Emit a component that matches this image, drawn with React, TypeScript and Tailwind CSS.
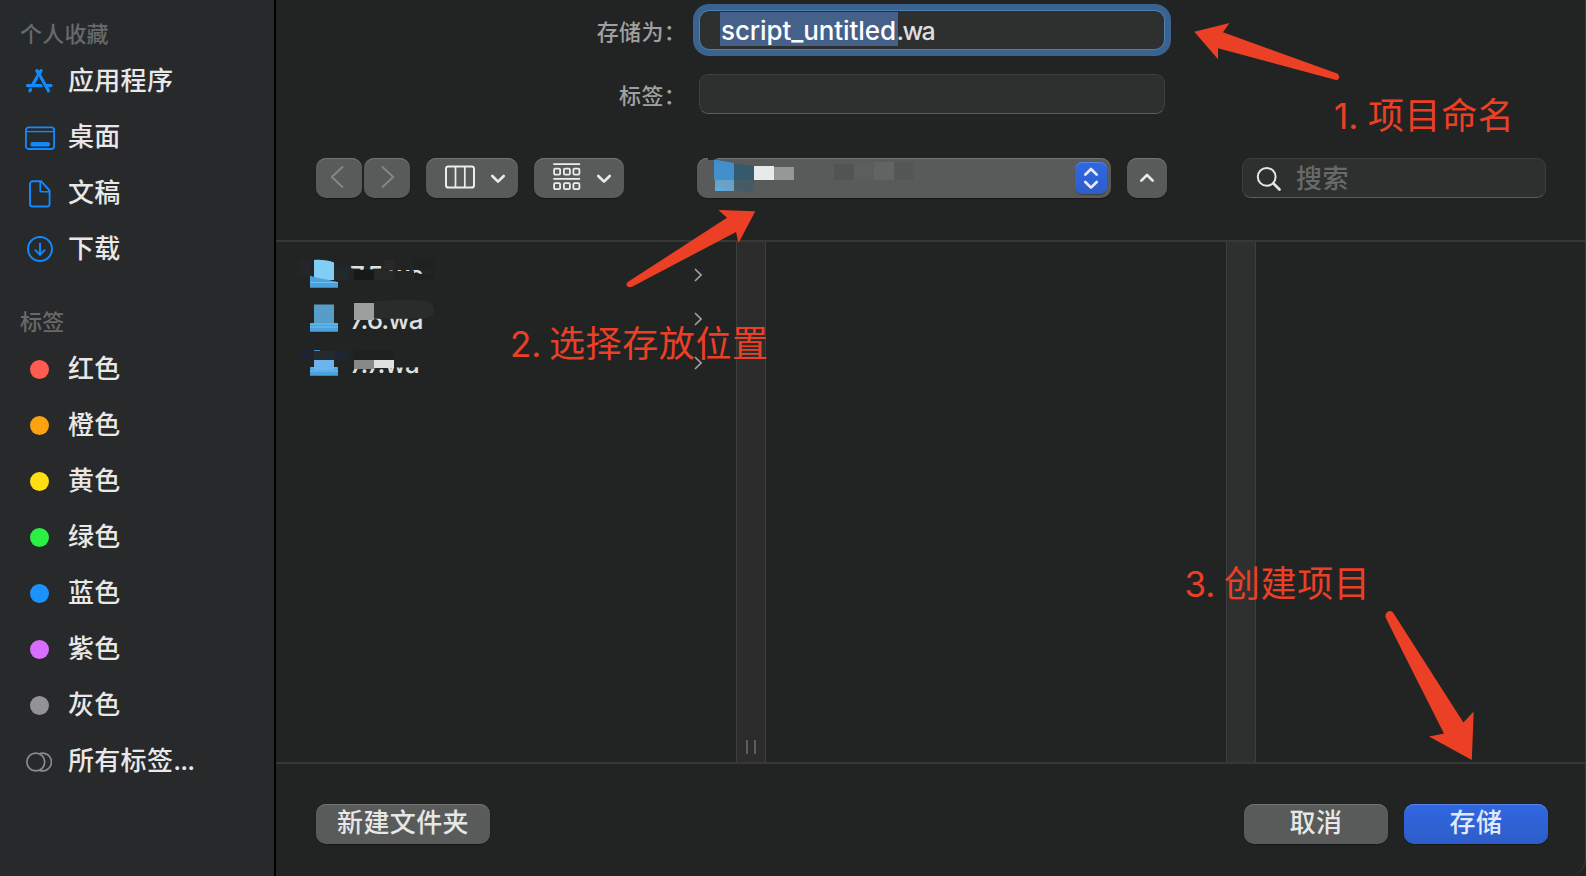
import type { ReactNode } from "react";

function AppsIcon() {
  return (
    <svg width="28" height="26" viewBox="0 0 28 26" className="-ml-[2px]" fill="none" stroke="#108bff" strokeLinecap="round">
      <path d="M16 2.800 8.400 15.500" strokeWidth="3.400" />
      <path d="M12 2.800 23.400 22.800" strokeWidth="3.400" />
      <path d="M2.500 17.600h14.500M22 17.600h4" strokeWidth="3.200" />
      <path d="M5.600 21.600 4.900 22.800" strokeWidth="3.200" />
      <path d="m13.200 8.800 8.800 16" stroke="#28292b" strokeWidth="1.200" strokeLinecap="butt" />
    </svg>
  );
}

function DesktopIcon() {
  return (
    <svg width="30" height="24" viewBox="0 0 30 24" className="mt-px" fill="none" stroke="#108bff" strokeWidth="1.8">
      <rect x="0.9" y="1.4" width="28.2" height="21.6" rx="2.8" />
      <path d="M1 5.600h28" strokeWidth="1.4" />
      <rect x="6" y="16.6" width="18.4" height="3.4" rx="0.8" fill="#108bff" stroke="#108bff" strokeWidth="1" />
    </svg>
  );
}

function DocumentIcon() {
  return (
    <svg width="22" height="28" viewBox="0 0 22 28" className="mt-px" fill="none" stroke="#108bff" strokeWidth="1.9" strokeLinejoin="round">
      <path d="M3.6 1.300h8.600l8.400 9.200v13.400a2.600 2.600 0 0 1-2.600 2.600H3.600A2.600 2.600 0 0 1 1 23.900V3.900a2.600 2.600 0 0 1 2.600-2.600Z" />
      <path d="M11.200 1.600v9.200a1 1 0 0 0 1 1h8" strokeWidth="1.6" />
    </svg>
  );
}

function DownloadIcon() {
  return (
    <svg width="26" height="26" viewBox="0 0 26 26" fill="none" stroke="#108bff" strokeWidth="1.9" strokeLinecap="round" strokeLinejoin="round">
      <circle cx="13" cy="13" r="12" />
      <path d="M13 7.400v11M8.400 14.200l4.600 4.600 4.600-4.600" />
    </svg>
  );
}

function AllTagsIcon() {
  return (
    <svg width="26" height="20" viewBox="0 0 26 20" className="mt-px -ml-[2px]" fill="none" stroke="#8b8c8d" strokeWidth="1.7">
      <circle cx="9.8" cy="10" r="8.9" />
      <path d="M13.600 1.600a8.900 8.900 0 1 1 0 16.800" />
    </svg>
  );
}

function Chevron({ up = false, color = "#e9eaea" }: { up?: boolean; color?: string }) {
  return (
    <svg width="16" height="10" viewBox="0 0 16 10" fill="none" stroke={color} strokeWidth="2.7" strokeLinecap="round" strokeLinejoin="round">
      <path d={up ? "M2.3 7.6 8 2 13.7 7.6" : "M2.3 2 8 7.6 13.7 2"} />
    </svg>
  );
}

const favorites = [
  { label: "应用程序", icon: <AppsIcon /> },
  { label: "桌面", icon: <DesktopIcon /> },
  { label: "文稿", icon: <DocumentIcon /> },
  { label: "下载", icon: <DownloadIcon /> },
];

const tags = [
  { label: "红色", dot: "bg-[#ff5c50]" },
  { label: "橙色", dot: "bg-[#faa30f]" },
  { label: "黄色", dot: "bg-[#ffdf14]" },
  { label: "绿色", dot: "bg-[#2bf044]" },
  { label: "蓝色", dot: "bg-[#1b93ff]" },
  { label: "紫色", dot: "bg-[#d76eff]" },
  { label: "灰色", dot: "bg-[#929297]" },
];

function SidebarRow({ icon, children }: { icon: ReactNode; children: ReactNode }) {
  return (
    <div className="flex h-14 items-center">
      <span className="flex w-[30px] justify-center">{icon}</span>
      <span className="ml-[13px] text-[26px] leading-8 font-medium tracking-[0.3px] text-[#e8e8e8]">{children}</span>
    </div>
  );
}

function Sidebar() {
  return (
    <aside className="flex w-[276px] shrink-0 flex-col border-r-2 border-black bg-[#28292b] bg-linear-to-b from-[#262a2b] to-[#28292b] to-15% pt-[15px] pl-[25px]">
      <h2 className="-ml-[5px] flex h-[38px] items-center text-[22px] leading-7 font-medium tracking-[0.2px] text-[#67696a]">个人收藏</h2>
      {favorites.map((f) => (
        <SidebarRow key={f.label} icon={f.icon}>{f.label}</SidebarRow>
      ))}
      <h2 className="mt-[26px] -ml-[5px] flex h-[38px] items-center text-[22px] leading-7 font-medium tracking-[0.2px] text-[#67696a]">标签</h2>
      {tags.map((t) => (
        <SidebarRow key={t.label} icon={<span className={`mt-px mr-px size-[19.5px] rounded-full ${t.dot}`} />}>{t.label}</SidebarRow>
      ))}
      <SidebarRow icon={<AllTagsIcon />}>所有标签<span className="tracking-[-0.8px]">...</span></SidebarRow>
    </aside>
  );
}

const grayButton =
  "flex h-10 items-center rounded-[10px] bg-[#595b5a] shadow-[inset_0_1px_0_#727473,0_1px_1px_rgba(0,0,0,0.35)]";

const field =
  "h-10 rounded-[9px] border border-[#3d3f3e] border-b-[#5a5c5b] bg-[#2e302f]";

function Mosaic() {
  return (
    <svg width="220" height="40" viewBox="0 0 220 40" className="shrink-0">
      <path d="M11 0h10l-5 2h-5Z" fill="#222423" />
      <path d="M17 2h3l17 3v17H17Z" fill="#4190cc" />
      <path d="M18 22h19v11H18Z" fill="#6aa2c7" />
      <path d="M18 29l6 1 5 2.500H18Z" fill="#4fb2ef" />
      <path d="M37 5l20 3v14H37Z" fill="#345a6c" />
      <path d="M37 22h20v13l-20-3Z" fill="#475b67" />
      <rect x="57" y="8" width="20" height="14" fill="#e8eaea" />
      <rect x="77" y="9" width="20" height="13" fill="#969898" />
      <rect x="137" y="6" width="20" height="16" fill="#525453" />
      <rect x="157" y="5" width="20" height="17" fill="#5c5e5d" />
      <rect x="177" y="4" width="20" height="18" fill="#626463" />
      <rect x="197" y="4" width="20" height="18" fill="#555756" />
    </svg>
  );
}

function Toolbar() {
  return (
    <div className="flex h-10 items-center pl-10">
      <button className={`${grayButton} w-[46px] pl-[14px]`}>
        <svg width="14" height="24" viewBox="0 0 14 24" className="-mt-[2px]" fill="none" stroke="#858786" strokeWidth="1.9" strokeLinecap="round" strokeLinejoin="round">
          <path d="M12.500 2 1.800 12l10.700 10" />
        </svg>
      </button>
      <button className={`${grayButton} ml-[2px] w-[46px] pl-[17px]`}>
        <svg width="14" height="24" viewBox="0 0 14 24" className="-mt-[2px]" fill="none" stroke="#858786" strokeWidth="1.9" strokeLinecap="round" strokeLinejoin="round">
          <path d="M1.500 2 12.200 12 1.500 22" />
        </svg>
      </button>
      <button className={`${grayButton} ml-4 w-[92px] pl-[19px]`}>
        <svg width="30" height="24" viewBox="0 0 30 24" className="-mt-[2px]" fill="none" stroke="#eceded" strokeWidth="2">
          <rect x="1" y="1.400" width="28" height="21.200" rx="2.400" />
          <path d="M10.500 1.400v21.200M19.800 1.400v21.200" strokeWidth="1.7" />
        </svg>
        <span className="mt-[1px] ml-[15px]"><Chevron /></span>
      </button>
      <button className={`${grayButton} ml-4 w-[90px] pl-[19px]`}>
        <svg width="28" height="28" viewBox="0 0 28 28" className="-mt-[2px]" fill="none" stroke="#eceded" strokeWidth="1.8">
          <path d="M0.300 1.100h26.800M0.300 15.900h26.800" />
          <rect x="1.1" y="5.6" width="6" height="6" rx="1.2" />
          <rect x="10.9" y="5.6" width="6" height="6" rx="1.2" />
          <rect x="20.4" y="5.6" width="6" height="6" rx="1.2" />
          <rect x="1.1" y="20.2" width="6" height="6" rx="1.2" />
          <rect x="10.9" y="20.2" width="6" height="6" rx="1.2" />
          <rect x="20.4" y="20.2" width="6" height="6" rx="1.2" />
        </svg>
        <span className="mt-[1px] ml-[15px]"><Chevron /></span>
      </button>
      <div className={`${grayButton} ml-[73px] w-[414px] justify-between pr-1`}>
        <Mosaic />
        <span className="flex h-8 w-8 flex-col items-center justify-center gap-[3px] rounded-[7px] bg-linear-to-b from-[#3067e2] to-[#2d5dc8] shadow-[inset_0_1px_0_#5583e6,0_1px_1px_rgba(0,0,0,0.3)]">
          <Chevron up color="#e6ecfb" />
          <Chevron color="#e6ecfb" />
        </span>
      </div>
      <button className={`${grayButton} ml-4 w-10 justify-center`}><Chevron up /></button>
      <div className={`${field} ml-[75px] flex w-[304px] items-center pl-[13px]`}>
        <svg width="28" height="28" viewBox="0 0 28 28" fill="none" stroke="#e4e5e5" strokeLinecap="round">
          <circle cx="10.7" cy="12.8" r="8.9" strokeWidth="2" />
          <path d="m17.500 19.600 6 6" strokeWidth="2.8" />
        </svg>
        <span className="mt-[2px] ml-[12px] text-[26px] leading-8 font-medium tracking-[0.4px] text-[#686a69]">搜索</span>
      </div>
    </div>
  );
}

function NameForm() {
  const label = "w-[410px] pt-[3px] text-right text-[22px] leading-7 font-medium tracking-[0.3px] text-[#9fa1a0]";
  return (
    <div className="flex flex-col gap-[25px] pt-[11px]">
      <div className="flex h-[38px] items-center">
        <label className={label}>存储为：</label>
        <div className="ml-[14px] flex h-[38px] w-[464px] items-center rounded-[9px] bg-[#2e302f] pl-5 text-[26px] leading-[38px] font-medium shadow-[0_0_0_1px_#4a7fb0,0_0_0_7px_#3a648f]">
          <span className="mb-[2px] h-[34px] w-[178px] bg-[#456089] pl-[1px] tracking-[-0.1px] text-white">script_untitled</span>
          <span className="mb-[2px] -ml-[1.5px] h-[34px] text-[25px] tracking-[-1.6px] text-[#dedfdf]">.wa</span>
        </div>
      </div>
      <div className="flex h-10 items-center">
        <label className={label}>标签：</label>
        <div className={`${field} ml-[13px] w-[466px]`} />
      </div>
    </div>
  );
}

const files = ["7.5.wa", "7.6.wa", "7.7.wa"];

function FolderIcon() {
  return (
    <svg width="28" height="28" viewBox="0 0 28 28">
      <rect x="4" y="2" width="20" height="18" fill="#5fa3cf" />
      <rect x="0" y="18" width="28" height="9" rx="1" fill="#4aa3df" />
      <path d="M0 19h28M0 22h28" stroke="#6fc0ee" />
      <path d="M0 26.500h28" stroke="#3784b8" />
    </svg>
  );
}

function FileMask() {
  return (
    <svg width="200" height="150" viewBox="0 0 200 150" className="absolute top-[-2px] left-[14px]">
      <rect x="9" y="19" width="15" height="17" fill="#24252a" />
      <path d="M20 14h28v28l-8-1-20-5Z" fill="#222423" />
      <path d="M24 20c8-.500 15 .500 20 2.500V40H24Z" fill="#80cdf6" />
      <path d="M20 35.500c6 3 17 3 28 7V46H20Z" fill="#4aa3df" />
      <path d="M20 42.500h28" stroke="#6fc0ee" />
      <path d="M44 25l20 4v11H44Z" fill="#202829" />
      <path d="M58 31l24-1.500 22 1.500h20v19H58Z" fill="#222423" />
      <path d="M64 30l20-.500V40H64Z" fill="#171918" />
      <path d="M84 29.500l20 1.500v9H84Z" fill="#272828" />
      <path d="M94 20h10v9H94Z" fill="#272828" />
      <path d="M124 20h20v9h-20Z" fill="#1f2120" />
      <path d="M120 33l12 1 12 1v15h-24Z" fill="#222423" />
      <path d="M124 33.500l8 .500 12 1v5h-20Z" fill="#1f2120" />
      <rect x="58" y="60" width="80" height="18.500" fill="#222423" />
      <rect x="20" y="60" width="28" height="4.500" fill="#222423" />
      <rect x="24" y="64.500" width="20" height="18.500" fill="#589dc8" />
      <path d="M84 61c18-1 32-1 44-.500 11 0 16 3 16 9 0 8-6 9-18 9H84Z" fill="#2a2b2b" />
      <rect x="64" y="63" width="20" height="17" fill="#9d9f9e" />
      <rect x="18" y="106" width="50" height="14" fill="#222423" />
      <path d="M9 115c2-5 6-6 12-6v10H12Z" fill="#1d2430" />
      <path d="M44 111h20v9H44Z" fill="#1e2632" />
      <rect x="24" y="111" width="20" height="9" fill="#252a2e" />
      <path d="M24 110.500h6" stroke="#3f8fc4" />
      <rect x="24" y="120" width="20" height="10" fill="#6db4ee" />
      <path d="M58 104h82v22.500l-18 1h-18l-20 1H58Z" fill="#222423" />
      <rect x="64" y="111" width="40" height="9" fill="#1e201f" />
      <rect x="64" y="120" width="20" height="9" fill="#878988" />
      <rect x="84" y="120" width="20" height="8" fill="#dfe1e0" />
    </svg>
  );
}

function Browser() {
  return (
    <div className="flex h-[524px] border-y-2 border-[#363837]">
      <div className="relative w-[460px] pt-[11px] pr-[34px] pl-[34px]">
        {files.map((name) => (
          <div key={name} className="flex h-11 items-center">
            <FolderIcon />
            <span className="mt-px ml-3 text-[26px] leading-8 font-medium tracking-[-1px] text-[#dfe0e0]">{name}</span>
            <svg width="8" height="14" viewBox="0 0 8 14" className="-mt-px ml-auto" fill="none" stroke="#a0a2a1" strokeWidth="1.6">
              <path d="m1 1 6 6-6 6" />
            </svg>
          </div>
        ))}
        <FileMask />
      </div>
      <div className="flex w-[30px] items-end justify-center gap-[6px] border-x border-[#3d3e3e] bg-[#2c2c2c] pb-2">
        <span className="h-[14px] w-[2px] bg-[#5c5d5d]" />
        <span className="h-[14px] w-[2px] bg-[#5c5d5d]" />
      </div>
      <div className="w-[460px]" />
      <div className="w-[30px] border-x border-[#3d3f3e] bg-[#2e302f]" />
      <div className="flex-1" />
    </div>
  );
}

function Footer() {
  const label = "mb-[3px] text-[26px] leading-8 font-medium tracking-[0.4px]";
  return (
    <div className="flex h-[112px] items-start pt-10 pr-[37px] pl-10">
      <button className={`${grayButton} w-[174px] justify-center text-[#e6e7e7]`}><span className={label}>新建文件夹</span></button>
      <button className={`${grayButton} ml-auto w-36 justify-center text-[#e6e7e7]`}><span className={label}>取消</span></button>
      <button className="ml-4 flex h-10 w-36 items-center justify-center rounded-[10px] bg-linear-to-b from-[#3067e2] to-[#2d5dc8] text-[#e3e9f9] shadow-[inset_0_1px_0_#5583e6,0_1px_1px_rgba(0,0,0,0.35)]">
        <span className={label}>存储</span>
      </button>
    </div>
  );
}

function Note({ place, number, gap, children }: { place: string; number: string; gap: string; children: ReactNode }) {
  return (
    <div className={`absolute flex text-[36px] leading-[44px] whitespace-nowrap text-[#eb4026] ${place}`}>
      <span className={`text-[35px] ${gap}`}>{number}</span>
      <span className="tracking-[0.6px]">{children}</span>
    </div>
  );
}

function Annotations() {
  return (
    <div className="pointer-events-none absolute inset-0">
      <svg width="1586" height="876" viewBox="0 0 1586 876" fill="#eb4026" className="absolute inset-0">
        <path d="M1194.300 31.700 1229.500 23l-6.500 9.300 113.500 40.900c3.800 1.400 3.500 7-.5 6.800L1218 48.200v11Z" />
        <path d="M755.300 211.300 718.500 210l8.500 7.800-98.500 63.700c-4.200 2.800-1.500 7 3.500 5.300L736 232l2.500 11Z" />
        <path d="M1471.800 760l1.900-48.500-10.300 11-70.200-109.800c-2.200-3.600-8.500-1.200-7.700 4.300.2 1.200 58.800 116.600 58.800 116.600l-15.300 2.900Z" />
      </svg>
      <Note place="top-[94px] left-[1334px]" number="1." gap="w-[34px]">项目命名</Note>
      <Note place="top-[322px] left-[510px]" number="2." gap="w-[39px]">选择存放位置</Note>
      <Note place="top-[562px] left-[1184.5px]" number="3." gap="w-[39.5px]">创建项目</Note>
    </div>
  );
}

export default function App() {
  return (
    <div className="relative flex h-[876px] w-[1586px] overflow-hidden bg-[#222423] font-['Inter','Noto_Sans_CJK_SC',sans-serif]">
      <Sidebar />
      <main className="flex flex-1 flex-col rounded-br-[18px] border-r border-[#3c3e3d]">
        <div className="h-[240px]">
          <NameForm />
          <div className="mt-11">
            <Toolbar />
          </div>
        </div>
        <Browser />
        <Footer />
      </main>
      <Annotations />
    </div>
  );
}
